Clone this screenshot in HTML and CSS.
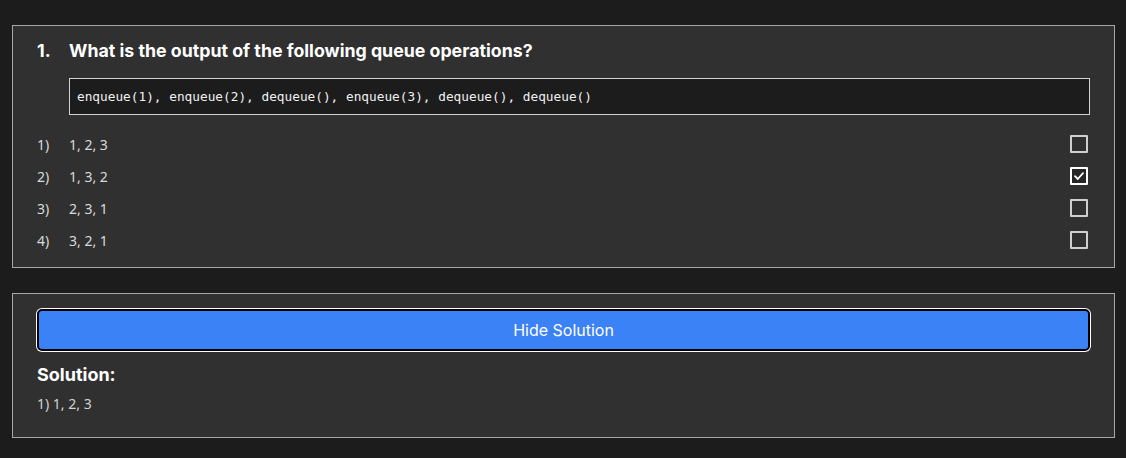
FILE: index.html
```
<!DOCTYPE html>
<html lang="en">
<head>
<meta charset="utf-8">
<title>Queue question</title>
<link rel="stylesheet" href="styles.css">
</head>
<body>
<main class="page">
  <section class="card question">
    <h2 class="q-title"><span class="q-num">1.</span><span class="q-text">What is the output of the following queue operations?</span></h2>
    <pre class="code">enqueue(1), enqueue(2), dequeue(), enqueue(3), dequeue(), dequeue()</pre>
    <ul class="options">
      <li class="option"><span class="opt-num">1)</span><span class="opt-text">1, 2, 3</span><span class="box"></span></li>
      <li class="option"><span class="opt-num">2)</span><span class="opt-text">1, 3, 2</span><span class="box checked"><svg viewBox="0 0 14 14" width="14" height="14"><polyline points="3,7.2 5.8,10 11,4.2" fill="none" stroke="#fff" stroke-width="1.8" stroke-linecap="round" stroke-linejoin="round"/></svg></span></li>
      <li class="option"><span class="opt-num">3)</span><span class="opt-text">2, 3, 1</span><span class="box"></span></li>
      <li class="option"><span class="opt-num">4)</span><span class="opt-text">3, 2, 1</span><span class="box"></span></li>
    </ul>
  </section>
  <section class="card solution">
    <button class="toggle" type="button">Hide Solution</button>
    <h3 class="sol-title">Solution:</h3>
    <p class="sol-text">1) 1, 2, 3</p>
  </section>
</main>
</body>
</html>
```
FILE: styles.css
```
html, body {
  margin: 0;
  background: #1c1c1c;
}
.page {
  padding: 25px 11px 0 12px;
  font-family: Inter, "Liberation Sans", sans-serif;
}
.card {
  background: #303030;
  border: 1px solid #a6a6a6;
  box-sizing: border-box;
}
.question {
  padding: 13px 24px 11px 24px;
}
.q-title {
  display: flex;
  margin: 0;
  font-size: 17.75px;
  line-height: 24px;
  font-weight: 700;
  color: #ffffff;
}
.q-num {
  width: 32px;
  flex: none;
}
.code {
  margin: 15px 0 0 32px;
  padding: 9px 7px;
  background: #1c1c1c;
  border: 1px solid #d2d2d2;
  color: #f0f0f0;
  font-family: "DejaVu Sans Mono", "Liberation Mono", monospace;
  font-size: 12.78px;
  line-height: 17px;
  white-space: pre;
}
.options {
  list-style: none;
  margin: 13px 0 0 0;
  padding: 0;
}
.option {
  display: flex;
  align-items: center;
  height: 32px;
  font-family: "Noto Sans", sans-serif;
  font-size: 14px;
  color: #dadada;
}
.opt-num {
  width: 32px;
  flex: none;
}
.opt-text {
  flex: 1;
}
.box {
  width: 18px;
  height: 18px;
  box-sizing: border-box;
  border: 2px solid #cfcfcf;
  border-radius: 1px;
  margin-right: 2px;
  display: flex;
  align-items: center;
  justify-content: center;
}
.box.checked {
  border-color: #ffffff;
  background: #262626;
}
.solution {
  margin-top: 25px;
  padding: 15px 24px 23px 24px;
}
.toggle {
  display: block;
  width: 100%;
  height: 42px;
  box-sizing: border-box;
  background: #3b82f6;
  border: 2px solid #000;
  border-radius: 5px;
  box-shadow: 0 0 0 1px #fff;
  color: #ffffff;
  font-family: Inter, "Liberation Sans", sans-serif;
  font-size: 16px;
  padding: 0;
}
.sol-title {
  margin: 10px 0 0 0;
  font-size: 18px;
  line-height: 28px;
  font-weight: 700;
  color: #ffffff;
}
.sol-text {
  margin: 5px 0 0 0;
  font-family: "Noto Sans", sans-serif;
  font-size: 14px;
  line-height: 20px;
  color: #d2d2d2;
}
```
